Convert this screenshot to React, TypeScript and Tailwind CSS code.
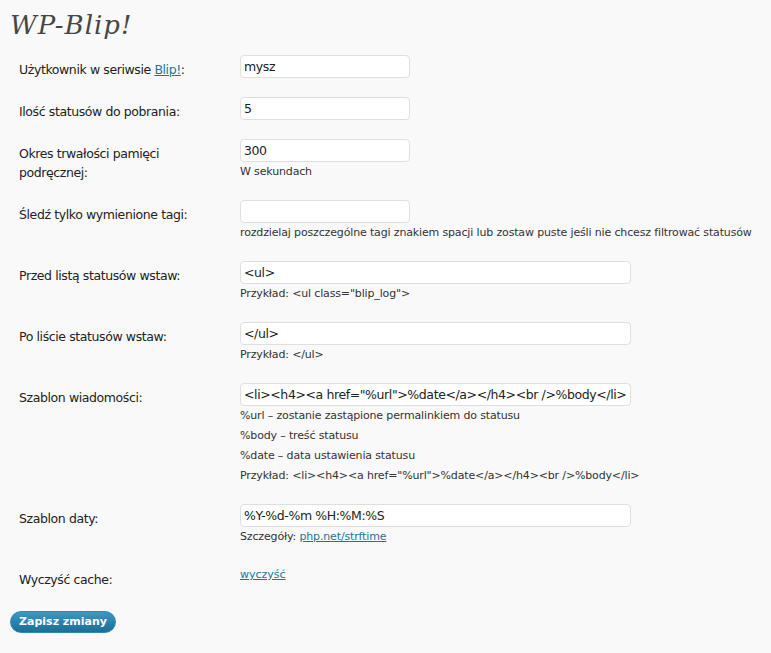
const label =
  "w-[240px] shrink-0 pl-[19px] pr-[10px] pt-[5px] text-[12.5px] leading-[19px] tracking-[-0.4px] text-[#222]";
const desc = "text-[11px] leading-[20px] tracking-[-0.15px] text-[#333]";
const input =
  "h-[23px] rounded-[4px] border border-[#dfdfdf] bg-white px-[3px] text-[12.5px] tracking-[-0.4px] text-[#222] outline-none";

const rows = [
  { label: "Ilość statusów do pobrania:", value: "5", wide: false, notes: [] as string[] },
];

export default function App() {
  return (
    <div
      className="min-h-screen bg-[#f9f9f9] text-[#333]"
      style={{ fontFamily: '"DejaVu Sans", "Noto Sans", sans-serif' }}
    >
      <h2
        className="px-[10px] pt-[8px] pb-[4px] text-[26px] italic leading-[34px] tracking-[1px] text-[#464646]"
        style={{ fontFamily: '"DejaVu Serif", "Liberation Serif", serif' }}
      >
        WP-Blip!
      </h2>

      <div className="flex flex-col">
        {/* Użytkownik */}
        <div className="flex py-[9px]">
          <div className={label}>
            Użytkownik w seriwsie{" "}
            <a href="#" className="text-[#21759b] underline">
              Blip!
            </a>
            :
          </div>
          <input className={input + " w-[170px]"} defaultValue="mysz" />
        </div>

        {rows.map((r) => (
          <div key={r.label} className="flex py-[9px]">
            <div className={label}>{r.label}</div>
            <input className={input + " w-[170px]"} defaultValue={r.value} />
          </div>
        ))}

        {/* Okres */}
        <div className="flex py-[9px]">
          <div className={label}>Okres trwałości pamięci podręcznej:</div>
          <div className="flex flex-col">
            <input className={input + " w-[170px]"} defaultValue="300" />
            <span className={desc}>W sekundach</span>
          </div>
        </div>

        {/* Tagi */}
        <div className="flex py-[9px]">
          <div className={label}>Śledź tylko wymienione tagi:</div>
          <div className="flex flex-col">
            <input className={input + " w-[170px]"} defaultValue="" />
            <span className={desc + " whitespace-nowrap"}>
              rozdzielaj poszczególne tagi znakiem spacji lub zostaw puste jeśli nie chcesz filtrować statusów
            </span>
          </div>
        </div>

        {/* Przed */}
        <div className="flex py-[9px]">
          <div className={label}>Przed listą statusów wstaw:</div>
          <div className="flex flex-col">
            <input className={input + " w-[391px]"} defaultValue="<ul>" />
            <span className={desc}>Przykład: &lt;ul class="blip_log"&gt;</span>
          </div>
        </div>

        {/* Po */}
        <div className="flex py-[9px]">
          <div className={label}>Po liście statusów wstaw:</div>
          <div className="flex flex-col">
            <input className={input + " w-[391px]"} defaultValue="</ul>" />
            <span className={desc}>Przykład: &lt;/ul&gt;</span>
          </div>
        </div>

        {/* Szablon wiadomości */}
        <div className="flex py-[9px]">
          <div className={label}>Szablon wiadomości:</div>
          <div className="flex flex-col">
            <input
              className={input + " w-[391px]"}
              defaultValue={'<li><h4><a href="%url">%date</a></h4><br />%body</li>'}
            />
            <span className={desc}>%url – zostanie zastąpione permalinkiem do statusu</span>
            <span className={desc}>%body – treść statusu</span>
            <span className={desc}>%date – data ustawienia statusu</span>
            <span className={desc}>
              Przykład: &lt;li&gt;&lt;h4&gt;&lt;a href="%url"&gt;%date&lt;/a&gt;&lt;/h4&gt;&lt;br /&gt;%body&lt;/li&gt;
            </span>
          </div>
        </div>

        {/* Szablon daty */}
        <div className="flex py-[9px]">
          <div className={label}>Szablon daty:</div>
          <div className="flex flex-col">
            <input className={input + " w-[391px]"} defaultValue="%Y-%d-%m %H:%M:%S" />
            <span className={desc}>
              Szczegóły:{" "}
              <a href="#" className="text-[#21759b] underline">
                php.net/strftime
              </a>
            </span>
          </div>
        </div>

        {/* Cache */}
        <div className="flex py-[9px]">
          <div className={label}>Wyczyść cache:</div>
          <a href="#" className="h-fit text-[11px] leading-[20px] text-[#21759b] underline">
            wyczyść
          </a>
        </div>
      </div>

      <div className="px-[10px] pt-[10px]">
        <button className="h-[22px] w-[106px] rounded-full border border-[#298cba] bg-gradient-to-b from-[#3d97c6] to-[#1e6d94] text-[11px] font-bold text-white">
          Zapisz zmiany
        </button>
      </div>
    </div>
  );
}
